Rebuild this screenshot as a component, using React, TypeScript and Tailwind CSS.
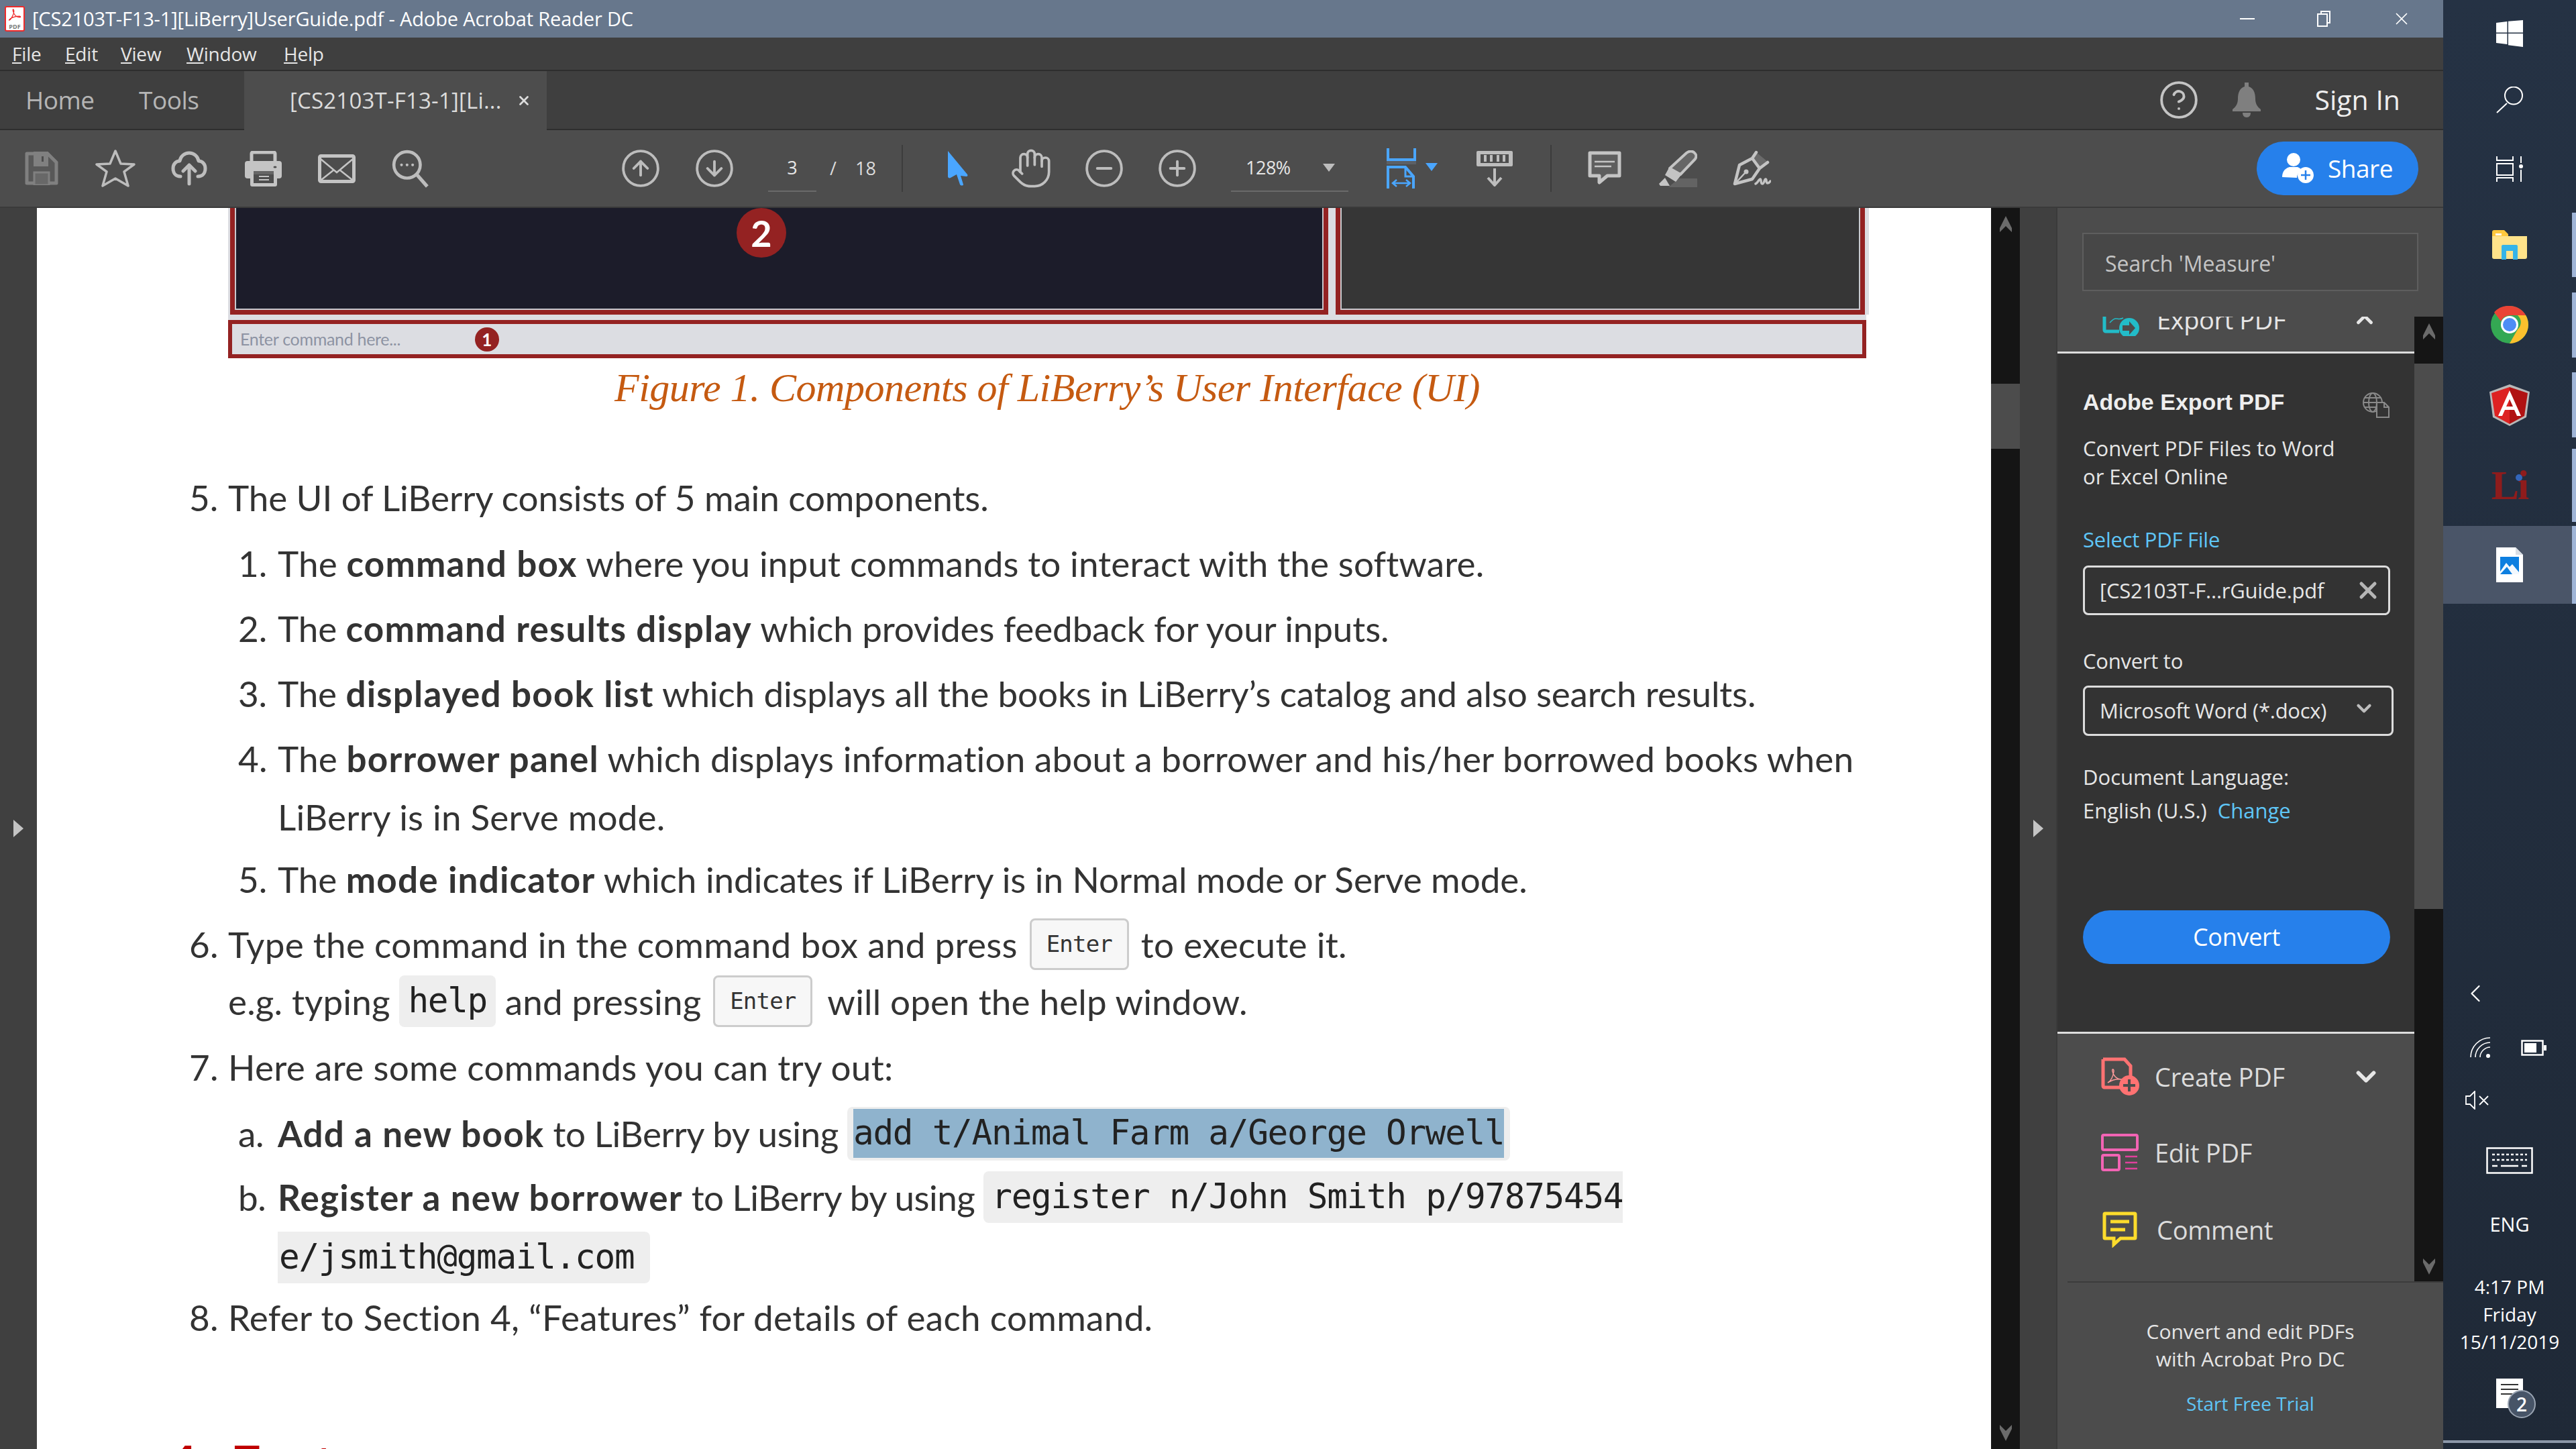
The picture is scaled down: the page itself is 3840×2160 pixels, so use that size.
import { ReactNode } from 'react';
import { Hand, CircleMinus, CirclePlus, CircleArrowUp, CircleArrowDown, CircleHelp, ChevronDown, ChevronUp, ChevronLeft, X } from 'lucide-react';

function Slot({ className, children }: { className: string; children: ReactNode }) {
  return <div className={`flex items-center justify-center ${className}`}>{children}</div>;
}

function U({ children }: { children: string }) {
  return <span className="underline">{children}</span>;
}

function AdobeMark({ color, className }: { color: string; className: string }) {
  return (
    <svg viewBox="0 0 30 30" className={className} fill="none" stroke={color} strokeWidth="1.6">
      <path d="M4 26c3-1 6-7 8-12 1-3 2-9 0-10-2 0 0 7 3 11 2 3 6 5 10 5 3 0 2-2-1-2-5 0-13 2-18 5-3 2-3 4-2 3z" />
    </svg>
  );
}

function SaveIcon() {
  return (
    <svg viewBox="0 0 50 50" className="h-[50px] w-[50px]">
      <path fill="#585858" stroke="#808080" strokeWidth="5" strokeLinejoin="round" d="M3 3h31l13 13v31H3z" />
      <path fill="#808080" d="M13 0h22v22H13z" />
      <path fill="#4d4d4d" d="M25 7h3v8h-3z" />
      <path fill="#686868" stroke="#808080" strokeWidth="3" d="M14 31h22v19H14z" />
    </svg>
  );
}

function StarIcon() {
  return (
    <svg viewBox="0 0 60 56" className="h-[56px] w-[60px]" fill="none" stroke="#bdbdbd" strokeWidth="3.5" strokeLinejoin="round">
      <path d="M30 2l8 19 20 1-15 11 6 21-19-11-19 11 6-21L2 22l20-1z" />
    </svg>
  );
}

function CloudIcon() {
  return (
    <svg viewBox="0 0 54 52" className="h-[52px] w-[54px]" fill="none" stroke="#bdbdbd" strokeWidth="5" strokeLinecap="round" strokeLinejoin="round">
      <path d="M14 38C6 38 3 32 3 26c0-6 4-11 10-11C14 8 20 3 27 3s13 5 14 12c6 0 10 5 10 11 0 6-3 12-11 12" />
      <path d="M27 49V21M18 30l9-9 9 9" />
    </svg>
  );
}

function PrinterIcon() {
  return (
    <svg viewBox="0 0 55 53" className="h-[53px] w-[55px]">
      <rect x="10" y="2" width="35" height="20" rx="2" fill="none" stroke="#c4c4c4" strokeWidth="5" />
      <rect x="0" y="15" width="55" height="26" rx="4" fill="#c4c4c4" />
      <rect x="8" y="28" width="40" height="25" rx="3" fill="#c4c4c4" />
      <path fill="#666" d="M13 30h30v5H13z" />
      <path fill="#4d4d4d" d="M13 35h30v13H13z" />
      <path fill="#c4c4c4" d="M21 37h15v2H21zM21 42h15v2H21z" />
      <ellipse cx="45" cy="24" rx="2.5" ry="1.5" fill="#4d4d4d" />
    </svg>
  );
}

function MailIcon() {
  return (
    <svg viewBox="0 0 56 43" className="h-[43px] w-[56px]" fill="none" stroke="#c4c4c4">
      <rect x="2.5" y="2.5" width="51" height="38" rx="2" strokeWidth="5" />
      <path d="M4 7l24 20L52 7M5 38l19-15M51 38L32 23" strokeWidth="2.5" />
    </svg>
  );
}

function FindIcon() {
  return (
    <svg viewBox="0 0 56 56" className="h-[58px] w-[58px]" fill="none" stroke="#bdbdbd" strokeWidth="4.5">
      <circle cx="23" cy="23" r="19" />
      <path d="M37 37l15 17" strokeWidth="5" />
      <circle cx="15" cy="23" r="2" fill="#bdbdbd" stroke="none" />
      <circle cx="23" cy="23" r="2" fill="#bdbdbd" stroke="none" />
      <circle cx="31" cy="23" r="2" fill="#bdbdbd" stroke="none" />
    </svg>
  );
}

function PointerIcon() {
  return (
    <svg viewBox="0 0 32 52" className="h-[52px] w-[32px]">
      <path fill="#4aa6ff" d="M1 0l29 35c1 2 0 3-2 3l-8-1 4 13c0 2-4 2-5 0l-5-15-9 5c-2 1-4 0-4-2z" />
    </svg>
  );
}

function FitWidthIcon() {
  return (
    <svg viewBox="0 0 44 60" className="h-[60px] w-[44px]" fill="none" stroke="#4aa6ff" strokeWidth="4">
      <path d="M2 0v17h40V0" />
      <path fill="#5b6066" stroke="none" d="M0 19h44v5H0z" />
      <path d="M2 60V28h26l12 14v18" />
      <path d="M28 28v14h12" strokeWidth="3" />
      <path d="M10 52h24M15 47l-6 5 6 5M29 47l6 5-6 5" strokeWidth="2.5" />
    </svg>
  );
}

function MeasureIcon() {
  return (
    <svg viewBox="0 0 56 54" className="h-[54px] w-[56px]">
      <rect x="1" y="1" width="54" height="23" rx="2" fill="#bdbdbd" />
      <path fill="#4d4d4d" d="M7 6h42v13H7z" />
      <path stroke="#bdbdbd" strokeWidth="4" d="M14 7v10M23 7v10M33 7v10M42 7v10" />
      <path fill="none" stroke="#bdbdbd" strokeWidth="4" d="M28 27v25M18 41l10 11 10-11" />
    </svg>
  );
}

function CommentIcon() {
  return (
    <svg viewBox="0 0 50 52" className="h-[52px] w-[50px]">
      <path fill="#5e5e5e" stroke="#c4c4c4" strokeWidth="5" strokeLinejoin="round" d="M3 3h44v34H29L17 47V37H3z" />
      <path stroke="#c4c4c4" strokeWidth="2.5" d="M10 16h30M10 23h25" />
    </svg>
  );
}

function HighlightIcon() {
  return (
    <svg viewBox="0 0 57 55" className="h-[55px] w-[57px]">
      <path fill="#636363" d="M30 42h27v13H14z" />
      <path fill="#666" stroke="#c4c4c4" strokeWidth="4" strokeLinejoin="round" d="M16 27L41 4c4-3 8-3 11-1 4 3 4 7 2 10L32 36z" />
      <path fill="#c4c4c4" d="M15 26l18 11-8 10-16-10z" />
      <path fill="#c4c4c4" d="M0 50l9-9 7 12H2z" />
    </svg>
  );
}

function SignIcon() {
  return (
    <svg viewBox="0 0 57 54" className="h-[54px] w-[57px]" fill="none" stroke="#c4c4c4" strokeLinecap="round" strokeLinejoin="round">
      <path fill="#6a6a6a" stroke="none" d="M35 3l17 14-12 10-12-15z" />
      <path strokeWidth="4.5" d="M29 12L10 22 3 50l26-7 11-16zM35 3l-6 9M52 18l-12 9" />
      <circle cx="20" cy="32" r="3.5" fill="#c4c4c4" stroke="none" />
      <path strokeWidth="2.5" d="M19 33L5 48" />
      <path strokeWidth="3.5" d="M34 50c3-1 5-7 7-7s0 7 3 7 3-7 5-7 0 6 3 6 3-2 4-3" />
    </svg>
  );
}

function ShareIcon() {
  return (
    <svg viewBox="0 0 48 46" className="h-[46px] w-[48px]">
      <circle cx="17" cy="10" r="10" fill="#fff" />
      <path fill="#fff" d="M0 36c0-8 4-13 11-15h12c3 1 5 3 7 5-5 2-8 6-8 11l-22-1z" />
      <circle cx="35" cy="33" r="12" fill="#fff" />
      <path stroke="#2680eb" strokeWidth="2.5" d="M35 26v14M28 33h14" />
    </svg>
  );
}

function BellIcon() {
  return (
    <svg viewBox="0 0 44 52" className="h-[52px] w-[44px]">
      <path fill="#7f7f7f" d="M19 0h6v6c7 2 10 9 10 18 0 8 3 12 8 16v3H1v-3c5-4 8-8 8-16 0-9 3-16 10-18z" />
      <path fill="#7f7f7f" d="M16 45h12c0 4-2 7-6 7s-6-3-6-7z" />
    </svg>
  );
}

function WindowsLogo() {
  return (
    <svg viewBox="0 0 40 40" className="h-[40px] w-[40px]" fill="#fff">
      <path d="M0 4l16.5-2v16.5H0zM18 1.7L40 0v18.5H18zM0 20h16.5v16L0 34zM18 20h22v20l-22-2.7z" />
    </svg>
  );
}

function FolderIcon() {
  return (
    <svg viewBox="0 0 52 44" className="h-[44px] w-[52px]">
      <path fill="#ffc83d" d="M0 3a3 3 0 0 1 3-3h15l6 6v6H0z" />
      <path fill="#ffe38a" d="M0 9h52v31a3 3 0 0 1-3 3H3a3 3 0 0 1-3-3z" />
      <path fill="#fff" d="M5 5h9v3H5z" />
      <path fill="#35b4e8" d="M14 44V24a2 2 0 0 1 2-2h20a2 2 0 0 1 2 2v20h-7V31H21v13z" />
    </svg>
  );
}

function ChromeLogo() {
  return (
    <svg viewBox="0 0 56 56" className="h-[56px] w-[56px]">
      <circle cx="28" cy="28" r="28" fill="#34a853" />
      <path fill="#ea4335" d="M28 0a28 28 0 0 1 24.2 14H28a14 14 0 0 0-13 9L5 9.5A28 28 0 0 1 28 0z" />
      <path fill="#fbc02d" d="M52.2 14A28 28 0 0 1 28 56l12-21a14 14 0 0 0 0-21z" />
      <circle cx="28" cy="28" r="13" fill="#fff" />
      <circle cx="28" cy="28" r="10" fill="#4e8df5" />
    </svg>
  );
}

function AngularLogo() {
  return (
    <svg viewBox="0 0 60 62" className="h-[62px] w-[60px]">
      <path fill="#b8b8b8" d="M30 0l30 11-5 38-25 13L5 49 0 11z" />
      <path fill="#dd2222" d="M30 4L3 13l5 34 22 12z" />
      <path fill="#b01212" d="M30 4l27 9-5 34-22 12z" />
      <path fill="#fff" d="M30 9l-17 38h6l4-9h14l4 9h6zm0 13l5 11H25z" />
    </svg>
  );
}

function PdfFileIcon() {
  return (
    <svg viewBox="0 0 40 52" className="h-[52px] w-[40px]">
      <path fill="#fff" d="M0 0h29l11 11v41H0z" />
      <path fill="#d9dee5" d="M29 0l11 11H29z" />
      <path fill="#0d7fe0" d="M6 14h28v26H6z" />
      <path fill="#fff" d="M6 36l9-13 5 6 4-4 10 12v3H6z" opacity=".95" />
      <path fill="#0d7fe0" d="M6 40l10-11 8 11z" />
    </svg>
  );
}

function CreatePdfIcon() {
  return (
    <svg viewBox="0 0 58 58" className="h-[58px] w-[58px]">
      <path fill="none" stroke="#ff7272" strokeWidth="5" d="M3 3h32l9 10v20M30 45H5a2 2 0 0 1-2-2V3" />
      <path fill="none" stroke="#ff9a9a" strokeWidth="1.5" d="M10 38c5-3 8-10 9-17 0-4-3-4-2 0 1 6 6 12 14 12-7-1-15 1-21 5z" />
      <circle cx="42" cy="42" r="15" fill="#ff7272" />
      <path stroke="#4c4c4c" strokeWidth="4" d="M42 33v18M33 42h18" />
    </svg>
  );
}

function EditPdfIcon() {
  return (
    <svg viewBox="0 0 56 56" className="h-[56px] w-[56px]" fill="none">
      <rect x="2" y="2" width="52" height="22" rx="2" stroke="#f264b4" strokeWidth="4" />
      <rect x="2" y="32" width="25" height="22" rx="2" stroke="#f264b4" strokeWidth="4" />
      <path stroke="#e0409c" strokeWidth="2.5" d="M36 34h18M36 43h18M36 52h18" />
    </svg>
  );
}

function CommentYellowIcon() {
  return (
    <svg viewBox="0 0 52 54" className="h-[54px] w-[52px]" fill="none">
      <path stroke="#fcdc2c" strokeWidth="5" d="M4 3h44a1 1 0 0 1 1 1v35a1 1 0 0 1-1 1H27L17 49v-9H4a1 1 0 0 1-1-1V4a1 1 0 0 1 1-1z" />
      <path stroke="#fcdc2c" strokeWidth="5" d="M12 15h28M12 27h22" />
    </svg>
  );
}

function GlobeDocIcon() {
  return (
    <svg viewBox="0 0 40 38" className="h-[38px] w-[40px]" fill="none" stroke="#8a8a8a" strokeWidth="2">
      <circle cx="15" cy="15" r="14" />
      <ellipse cx="15" cy="15" rx="6" ry="14" />
      <path d="M1 15h28M3 8h24M3 22h24" />
      <path fill="#333" d="M21 15h11l7 7v15H21z" />
      <path d="M32 15v7h7" />
    </svg>
  );
}

function NavChevron({ up }: { up: boolean }) {
  return (
    <svg viewBox="0 0 20 24" className="h-[24px] w-[20px]">
      <path fill="#6b6b6b" d={up ? 'M10 0l9 18v6l-9-9-9 9v-6z' : 'M10 24l9-18V0l-9 9-9-9v6z'} />
    </svg>
  );
}

function Code({ className, children }: { className?: string; children: ReactNode }) {
  return (
    <span className={`flex h-[77px] items-center bg-[#eeeeee] font-['DejaVu_Sans_Mono',monospace] text-[51px] tracking-[-1.3px] whitespace-pre text-[#222] ${className ?? ''}`}>
      {children}
    </span>
  );
}

function Kbd({ className }: { className: string }) {
  return (
    <span className={`flex h-[77px] w-[148px] items-center justify-center rounded-[8px] border-[3px] border-[#cccccc] bg-[#f7f7f7] font-['DejaVu_Sans_Mono',monospace] text-[34px] tracking-[-0.8px] text-[#333] ${className}`}>
      Enter
    </span>
  );
}

function Row({ h, num, sub, children }: { h: string; num?: string; sub?: boolean; children: ReactNode }) {
  return (
    <div className={`flex items-center whitespace-pre ${h} ${sub ? 'pl-[300px]' : 'pl-[227px]'}`}>
      <span className={sub ? 'w-[59px]' : 'w-[58px]'}>{num}</span>
      {children}
    </div>
  );
}

export default function App() {
  return (
    <div className="flex h-[2160px] w-[3840px] overflow-hidden font-['Open_Sans',sans-serif]">
      <div className="flex w-[3642px] flex-col">
        {/* title bar */}
        <div className="flex h-[56px] items-center bg-[#67778c] text-[29px] text-white">
          <div className="flex h-[38px] w-[30px] ml-[7px] flex-col items-center justify-between rounded-[3px] border-[2px] border-[#ee2a2a] bg-white">
            <AdobeMark color="#e22" className="h-[22px] w-[22px]" />
            <span className="text-[9px] leading-[11px] font-bold text-[#777]">PDF</span>
          </div>
          <span className="ml-[11px] tracking-[-0.15px]">[CS2103T-F13-1][LiBerry]UserGuide.pdf - Adobe Acrobat Reader DC</span>
          <div className="ml-auto flex items-center pr-[47px]">
            <div className="h-[2px] w-[22px] bg-white" />
            <svg viewBox="0 0 20 24" className="ml-[93px] h-[24px] w-[20px]" fill="none" stroke="#fff" strokeWidth="2">
              <path d="M6 4V1h13v17h-4" />
              <rect x="1" y="5" width="14" height="18" />
            </svg>
            <X className="ml-[91px] h-[30px] w-[30px] text-white" strokeWidth={1.4} />
          </div>
        </div>

        {/* menu bar */}
        <div className="flex h-[50px] items-center border-b-[2px] border-[#2e2e2e] bg-[#3f3f3f] pl-[18px] text-[28px] text-[#e6e6e6]">
          <span className="w-[79px] tracking-[-0.2px]"><U>F</U>ile</span>
          <span className="w-[83px] tracking-[-0.2px]"><U>E</U>dit</span>
          <span className="w-[98px] tracking-[-0.2px]"><U>V</U>iew</span>
          <span className="w-[145px] tracking-[-0.2px]"><U>W</U>indow</span>
          <span className="tracking-[-0.2px]"><U>H</U>elp</span>
        </div>

        {/* tabs */}
        <div className="flex h-[88px] bg-[#3f3f3f]">
          <div className="flex w-[364px] items-center border-b-[2px] border-[#2e2e2e] pl-[38px] text-[37px] text-[#b5b5b5]">
            <span className="w-[169px] tracking-[-0.5px]">Home</span>
            <span className="tracking-[-0.5px]">Tools</span>
          </div>
          <div className="flex w-[451px] items-center bg-[#4d4d4d] pl-[68px] text-[33px] text-[#dcdcdc]">
            <span className="tracking-[0.2px]">[CS2103T-F13-1][Li...</span>
            <X className="ml-[22px] h-[22px] w-[22px] text-[#dcdcdc]" strokeWidth={3} />
          </div>
          <div className="flex flex-1 items-center justify-end border-b-[2px] border-[#2e2e2e] pr-[64px]">
            <CircleHelp className="h-[62px] w-[62px] text-[#c4c4c4]" strokeWidth={1.5} />
            <div className="ml-[48px]"><BellIcon /></div>
            <span className="ml-[80px] text-[41px] text-[#eeeeee]">Sign In</span>
          </div>
        </div>

        {/* toolbar */}
        <div className="flex h-[116px] items-center border-b-[2px] border-[#3a3a3a] bg-[#4d4d4d] pl-[7px]">
          <Slot className="w-[110px]"><SaveIcon /></Slot>
          <Slot className="w-[110px]"><StarIcon /></Slot>
          <Slot className="w-[110px]"><CloudIcon /></Slot>
          <Slot className="w-[110px]"><PrinterIcon /></Slot>
          <Slot className="w-[110px]"><MailIcon /></Slot>
          <Slot className="w-[110px]"><FindIcon /></Slot>
          <Slot className="ml-[233px] w-[110px]"><CircleArrowUp className="h-[62px] w-[62px] text-[#bdbdbd]" strokeWidth={1.5} /></Slot>
          <Slot className="w-[110px]"><CircleArrowDown className="h-[62px] w-[62px] text-[#bdbdbd]" strokeWidth={1.5} /></Slot>
          <span className="ml-[25px] flex h-[70px] w-[72px] items-center justify-center border-b-[2px] border-[#6a6a6a] text-[27px] text-[#e6e6e6]">3</span>
          <span className="ml-[20px] w-[107px] text-[27px] whitespace-pre text-[#dcdcdc]">/    18</span>
          <div className="h-[70px] w-[2px] bg-[#3c3c3c]" />
          <Slot className="ml-[27px] w-[109px]"><PointerIcon /></Slot>
          <Slot className="w-[109px]"><Hand className="h-[64px] w-[64px] text-[#c0c0c0]" strokeWidth={1.4} /></Slot>
          <Slot className="w-[109px]"><CircleMinus className="h-[62px] w-[62px] text-[#bdbdbd]" strokeWidth={1.5} /></Slot>
          <Slot className="w-[109px]"><CirclePlus className="h-[62px] w-[62px] text-[#bdbdbd]" strokeWidth={1.5} /></Slot>
          <div className="ml-[26px] flex h-[70px] w-[175px] items-center border-b-[2px] border-[#6a6a6a] pl-[22px] text-[27px] text-[#e6e6e6]">
            <span className="w-[115px] tracking-[-0.5px]">128%</span>
            <span className="h-0 w-0 border-x-[9px] border-t-[12px] border-x-transparent border-t-[#bdbdbd]" />
          </div>
          <div className="ml-[57px]"><FitWidthIcon /></div>
          <span className="ml-[14px] mb-[4px] h-0 w-0 border-x-[9px] border-t-[12px] border-x-transparent border-t-[#4aa6ff]" />
          <div className="ml-[57px]"><MeasureIcon /></div>
          <div className="ml-[55px] h-[70px] w-[2px] bg-[#3c3c3c]" />
          <div className="ml-[54px]"><CommentIcon /></div>
          <div className="ml-[56px]"><HighlightIcon /></div>
          <div className="ml-[53px]"><SignIcon /></div>
          <div className="ml-auto mr-[37px] flex h-[80px] w-[241px] items-center rounded-full bg-[#2680eb] pl-[38px] text-[37px] text-white">
            <ShareIcon />
            <span className="ml-[20px] tracking-[-0.5px]">Share</span>
          </div>
        </div>

        {/* body */}
        <div className="flex h-[1850px]">
          <div className="flex w-[55px] items-center justify-center bg-[#404040]">
            <span className="h-0 w-0 border-y-[13px] border-l-[15px] border-y-transparent border-l-[#c4c4c4]" />
          </div>

          {/* page */}
          <div className="w-[2913px] overflow-hidden bg-white font-['Lato',sans-serif] text-[53px] tracking-[0.2px] text-[#333] [&_b]:tracking-[1.2px]">
            <div className="relative ml-[285px] w-[2446px]">
              <div className="flex h-[159px] bg-[#dcdde2] px-[3px]">
                <div className="w-[1637px] border-x-[7px] border-b-[7px] border-[#942222]">
                  <div className="h-full border-x-[2px] border-b-[2px] border-[#c8c9ce] bg-[#1c1c2a]" />
                </div>
                <div className="ml-[11px] w-[789px] border-x-[7px] border-b-[7px] border-[#942222]">
                  <div className="h-full border-x-[2px] border-b-[2px] border-[#c8c9ce] bg-[#363636]" />
                </div>
              </div>
              <div className="h-[8px] w-[2442px] bg-[#dcdde2]" />
              <div className="flex h-[57px] w-[2442px] items-center border-[6px] border-[#942222] bg-[#dcdde2] pl-[12px] text-[25px] tracking-[-0.3px] text-[#8d93a3]">
                Enter command here...
              </div>
              {/* numbered callouts drawn over the figure */}
              <div className="absolute top-0 left-[758px] flex h-[74px] w-[74px] items-center justify-center rounded-full bg-[#942222] text-[54px] font-bold text-white">2</div>
              <div className="absolute top-[178px] left-[368px] flex h-[36px] w-[36px] items-center justify-center rounded-full bg-[#942222] text-[26px] font-bold text-white">1</div>
              <div className="w-[2442px] pt-[14px] text-center font-['Liberation_Serif',serif] text-[60px] leading-[60px] tracking-[-0.5px] text-[#c55a11] italic">
                Figure 1. Components of LiBerry’s User Interface (UI)
              </div>
            </div>

            <div className="mt-[85px]">
              <Row h="h-[98px] tracking-[-0.1px]" num="5.">The UI of LiBerry consists of 5 main components.</Row>
              <Row h="h-[97px] tracking-[0.13px]" sub num="1.">The <b>command box</b> where you input commands to interact with the software.</Row>
              <Row h="h-[97px] tracking-[-0.1px]" sub num="2.">The <b>command results display</b> which provides feedback for your inputs.</Row>
              <Row h="h-[98px] tracking-[-0.15px]" sub num="3.">The <b>displayed book list</b> which displays all the books in LiBerry’s catalog and also search results.</Row>
              <Row h="h-[92px] pt-[4px] tracking-[0.15px]" sub num="4.">The <b>borrower panel</b> which displays information about a borrower and his/her borrowed books when</Row>
              <Row h="h-[90px] pb-[4px]" sub>LiBerry is in Serve mode.</Row>
              <Row h="h-[95px] pb-[4px] tracking-[-0.05px]" sub num="5.">The <b>mode indicator</b> which indicates if LiBerry is in Normal mode or Serve mode.</Row>
              <Row h="h-[91px] pt-[4px] tracking-[0.3px]" num="6.">Type the command in the command box and press<Kbd className="ml-[18px] mr-[18px]" />to execute it.</Row>
              <Row h="h-[91px] pb-[8px] tracking-[0.15px]"><span>e.g. typing </span><Code className="rounded-[8px] px-[13px]">help</Code><span> and pressing</span><Kbd className="ml-[18px] mr-[22px]" />will open the help window.</Row>
              <Row h="h-[98px] tracking-[0.33px]" num="7.">Here are some commands you can try out:</Row>
              <Row h="h-[99px] tracking-[-0.4px]" sub num="a."><b>Add a new book</b> to LiBerry by using <Code className="h-[80px] rounded-[8px] px-[9px]"><span className="flex h-[73px] items-center bg-[#8fb3cd]">add t/Animal Farm a/George Orwell</span></Code></Row>
              <Row h="h-[91px] tracking-[-0.55px]" sub num="b."><b>Register a new borrower</b> to LiBerry by using <Code className="rounded-l-[8px] pl-[12px]">register n/John Smith p/97875454</Code></Row>
              <Row h="h-[88px]" sub><Code className="rounded-r-[8px] pr-[24px] pl-[2px]">e/jsmith@gmail.com</Code></Row>
              <Row h="h-[92px] tracking-[0.3px]" num="8.">Refer to Section 4, “Features” for details of each command.</Row>
            </div>
            <div className="mt-[132px] pl-[193px] text-[80px] leading-none font-bold text-[#c00000] [word-spacing:10px]">4. Features</div>
          </div>

          {/* page scrollbar */}
          <div className="relative flex w-[43px] flex-col items-center justify-between bg-[#151515] py-[12px]">
            <NavChevron up />
            <div className="absolute top-[262px] h-[97px] w-full bg-[#4c4c4c]" />
            <NavChevron up={false} />
          </div>

          <div className="flex w-[56px] items-center justify-center border-r-[2px] border-[#3a3a3a] bg-[#404040]">
            <span className="h-0 w-0 border-y-[13px] border-l-[15px] border-y-transparent border-l-[#c4c4c4]" />
          </div>

          {/* tools pane */}
          <div className="flex w-[575px] flex-col bg-[#4c4c4c]">
            <div className="h-[162px] pt-[37px] pl-[37px]">
              <div className="flex h-[87px] w-[501px] items-center border-[2px] border-[#5e5e5e] bg-[#474747] pt-[4px] pl-[32px] text-[32px] text-[#c4c4c4]">
                Search 'Measure'
              </div>
            </div>

            <div className="flex h-[1438px]">
              <div className="flex w-[532px] flex-col">
                <div className="h-[52px] overflow-hidden">
                  <div className="-mt-[21px] flex h-[50px] items-center pl-[67px] text-[38px] tracking-[-0.4px] text-[#e6e6e6]">
                    <svg viewBox="0 0 56 50" className="h-[50px] w-[56px]" fill="none">
                      <path stroke="#22bcc8" strokeWidth="5" d="M3 0v41a2 2 0 0 0 2 2h20" />
                      <path stroke="#22bcc8" strokeWidth="1.5" d="M11 30c3-3 5-6 9-6s5 2 11-1" />
                      <circle cx="40" cy="38" r="15" fill="#22bcc8" />
                      <path fill="#4c4c4c" d="M30 34h10v-6l9 10-9 10v-6H30z" />
                    </svg>
                    <span className="ml-[25px] w-[291px]">Export PDF</span>
                    <ChevronUp className="h-[38px] w-[38px] text-[#e6e6e6]" strokeWidth={3} />
                  </div>
                </div>

                <div className="relative h-[1017px] border-y-[3px] border-[#dddddd] bg-[#333333] pr-[36px] pl-[38px] text-[31px] text-[#e6e6e6]">
                  <div className="flex h-[98px] items-end">
                    <span className="font-['Liberation_Sans',sans-serif] text-[34px] font-bold text-[#eeeeee]">Adobe Export PDF</span>
                    <div className="absolute top-[58px] right-[37px]"><GlobeDocIcon /></div>
                  </div>
                  <div className="mt-[22px] text-[31px] leading-[42px]">Convert PDF Files to Word<br />or Excel Online</div>
                  <div className="mt-[51px] leading-[44px] tracking-[-0.25px] text-[#5fc6f7]">Select PDF File</div>
                  <div className="mt-[17px] flex h-[74px] w-[458px] items-center justify-between rounded-[8px] border-[3px] border-[#dddddd] pr-[10px] pl-[22px]">
                    <span className="tracking-[-0.25px]">[CS2103T-F...rGuide.pdf</span>
                    <X className="h-[40px] w-[40px] text-[#b5b5b5]" strokeWidth={3} />
                  </div>
                  <div className="mt-[46px] leading-[44px] tracking-[-0.25px]">Convert to</div>
                  <div className="mt-[15px] flex h-[75px] w-[463px] items-center justify-between rounded-[8px] border-[3px] border-[#dddddd] pr-[24px] pl-[22px]">
                    <span className="tracking-[-0.25px]">Microsoft Word (*.docx)</span>
                    <ChevronDown className="mb-[8px] h-[34px] w-[34px] text-[#bdbdbd]" strokeWidth={3} />
                  </div>
                  <div className="mt-[39px] leading-[44px]">Document Language:</div>
                  <div className="mt-[6px] leading-[44px]">English (U.S.)<span className="ml-[16px] text-[#5fc6f7]">Change</span></div>
                  <div className="mt-[127px] flex h-[80px] w-[458px] items-center justify-center rounded-full bg-[#2680eb] text-[36px] tracking-[-0.3px] text-white">Convert</div>
                </div>

                <div className="flex h-[128px] items-center pl-[65px] text-[38px] tracking-[-0.3px] text-[#dcdcdc]">
                  <CreatePdfIcon />
                  <span className="ml-[22px] w-[292px]">Create PDF</span>
                  <ChevronDown className="h-[46px] w-[46px] text-[#e6e6e6]" strokeWidth={3} />
                </div>
                <div className="flex h-[98px] items-center pl-[65px] text-[38px] tracking-[-0.3px] text-[#dcdcdc]">
                  <EditPdfIcon />
                  <span className="ml-[24px]">Edit PDF</span>
                </div>
                <div className="flex h-[132px] items-center pl-[67px] text-[38px] tracking-[-0.3px] text-[#dcdcdc]">
                  <CommentYellowIcon />
                  <span className="ml-[29px]">Comment</span>
                </div>
              </div>
              <div className="relative flex w-[43px] flex-col items-center justify-between bg-[#151515] py-[10px]">
                <NavChevron up />
                <div className="absolute top-[70px] h-[813px] w-full bg-[#4c4c4c]" />
                <NavChevron up={false} />
              </div>
            </div>

            <div className="ml-[15px] flex-1 border-t-[2px] border-[#3c3c3c] pt-[52px] text-center text-[30px] leading-[41px] text-[#e6e6e6]">
              <div className="pr-[15px]">Convert and edit PDFs<br />with Acrobat Pro DC</div>
              <div className="mt-[26px] pr-[15px] text-[28px] text-[#5fc6f7]">Start Free Trial</div>
            </div>
          </div>
        </div>
      </div>

      {/* windows taskbar */}
      <div className="flex w-[198px] flex-col items-center bg-gradient-to-b from-[#253244] to-[#1f2937] text-white">
        <Slot className="h-[100px] w-full"><WindowsLogo /></Slot>
        <Slot className="h-[98px] w-full">
          <svg viewBox="0 0 40 40" className="h-[40px] w-[40px]" fill="none" stroke="#fff" strokeWidth="2"><circle cx="26" cy="13.5" r="13" /><path d="M16 25L1 39" /></svg>
        </Slot>
        <Slot className="h-[108px] w-full">
          <svg viewBox="0 0 40 38" className="h-[38px] w-[40px]" fill="none" stroke="#fff" strokeWidth="2">
            <path d="M1 0v6h24V0M1 38v-6h24v6M1 11h24v17H1zM37 0v10M37 20v18" />
            <circle cx="37" cy="15" r="3" fill="#fff" stroke="none" />
          </svg>
        </Slot>
        <Slot className="relative h-[118px] w-full"><FolderIcon /><span className="absolute right-0 h-[96px] w-[6px] bg-[#9fb4d6]" /></Slot>
        <Slot className="relative h-[120px] w-full"><ChromeLogo /><span className="absolute right-0 h-[97px] w-[6px] bg-[#9fb4d6]" /></Slot>
        <Slot className="relative h-[119px] w-full"><AngularLogo /><span className="absolute right-0 h-[97px] w-[6px] bg-[#9fb4d6]" /></Slot>
        <Slot className="relative h-[121px] w-full">
          <span className="font-['Liberation_Serif',serif] text-[62px] font-bold tracking-[-2px] text-[#8e1c1c]">Li</span>
          <span className="absolute top-[44px] left-[108px] h-[10px] w-[10px] rounded-full bg-[#3366bb]" />
          <span className="absolute right-0 h-[109px] w-[6px] bg-[#9fb4d6]" />
        </Slot>
        <Slot className="relative h-[116px] w-full bg-[#4a5568]"><PdfFileIcon /><span className="absolute right-0 h-full w-[6px] bg-[#9fb4d6]" /></Slot>

        <div className="mt-[550px] flex h-[62px] w-full items-center pl-[26px]">
          <ChevronLeft className="h-[44px] w-[44px]" strokeWidth={1.2} />
        </div>
        <div className="mt-[20px] flex h-[60px] w-full items-center pl-[40px]">
          <svg viewBox="0 0 32 32" className="h-[32px] w-[32px]" fill="none" stroke="#fff" strokeWidth="1.6">
            <path d="M1 30C1 14 14 1 30 1M8 30C8 18 18 8 30 8M15 30c0-8 7-15 15-15" />
            <circle cx="27" cy="28" r="3" fill="#fff" stroke="none" />
          </svg>
          <svg viewBox="0 0 38 24" className="ml-[44px] h-[24px] w-[38px]" fill="none">
            <rect x="1.5" y="1.5" width="31" height="21" stroke="#fff" strokeWidth="2.5" />
            <path fill="#fff" d="M5 5h18v14H5zM34 8h4v8h-4z" />
          </svg>
        </div>
        <div className="mt-[18px] flex h-[60px] w-full items-center pl-[33px]">
          <svg viewBox="0 0 38 28" className="h-[28px] w-[38px]" fill="none" stroke="#fff" strokeWidth="1.8">
            <path d="M1 8h6l7-7v26l-7-7H1zM21 8l13 13M34 8L21 21" />
          </svg>
        </div>
        <Slot className="mt-[30px] h-[60px] w-full">
          <svg viewBox="0 0 70 40" className="h-[40px] w-[70px]" fill="none" stroke="#fff">
            <rect x="1.5" y="1.5" width="67" height="37" strokeWidth="2.5" />
            <path strokeWidth="2.5" strokeDasharray="4 3" d="M9 11h52M9 19h52" />
            <path strokeWidth="2.5" d="M9 28h8M22 28h26M53 28h8" />
          </svg>
        </Slot>
        <div className="mt-[35px] flex h-[60px] items-center text-[29px]">ENG</div>
        <div className="mt-[43px] text-center text-[28px] leading-[41px]">4:17 PM<br />Friday<br />15/11/2019</div>
        <div className="relative mt-[34px] h-[44px] w-[40px] bg-white">
          <div className="absolute top-[8px] left-[7px] h-[2px] w-[26px] bg-[#333]" />
          <div className="absolute top-[15px] left-[7px] h-[2px] w-[26px] bg-[#333]" />
          <div className="absolute top-[22px] left-[7px] h-[2px] w-[26px] bg-[#333]" />
          <div className="absolute top-[17px] left-[17px] flex h-[42px] w-[42px] items-center justify-center rounded-full border-[2px] border-[#9aa4b2] bg-[#475467] text-[28px] font-semibold">2</div>
        </div>
        <div className="mt-auto mb-[9px] h-[4px] w-full bg-[#8c97a8]" />
      </div>
    </div>
  );
}
